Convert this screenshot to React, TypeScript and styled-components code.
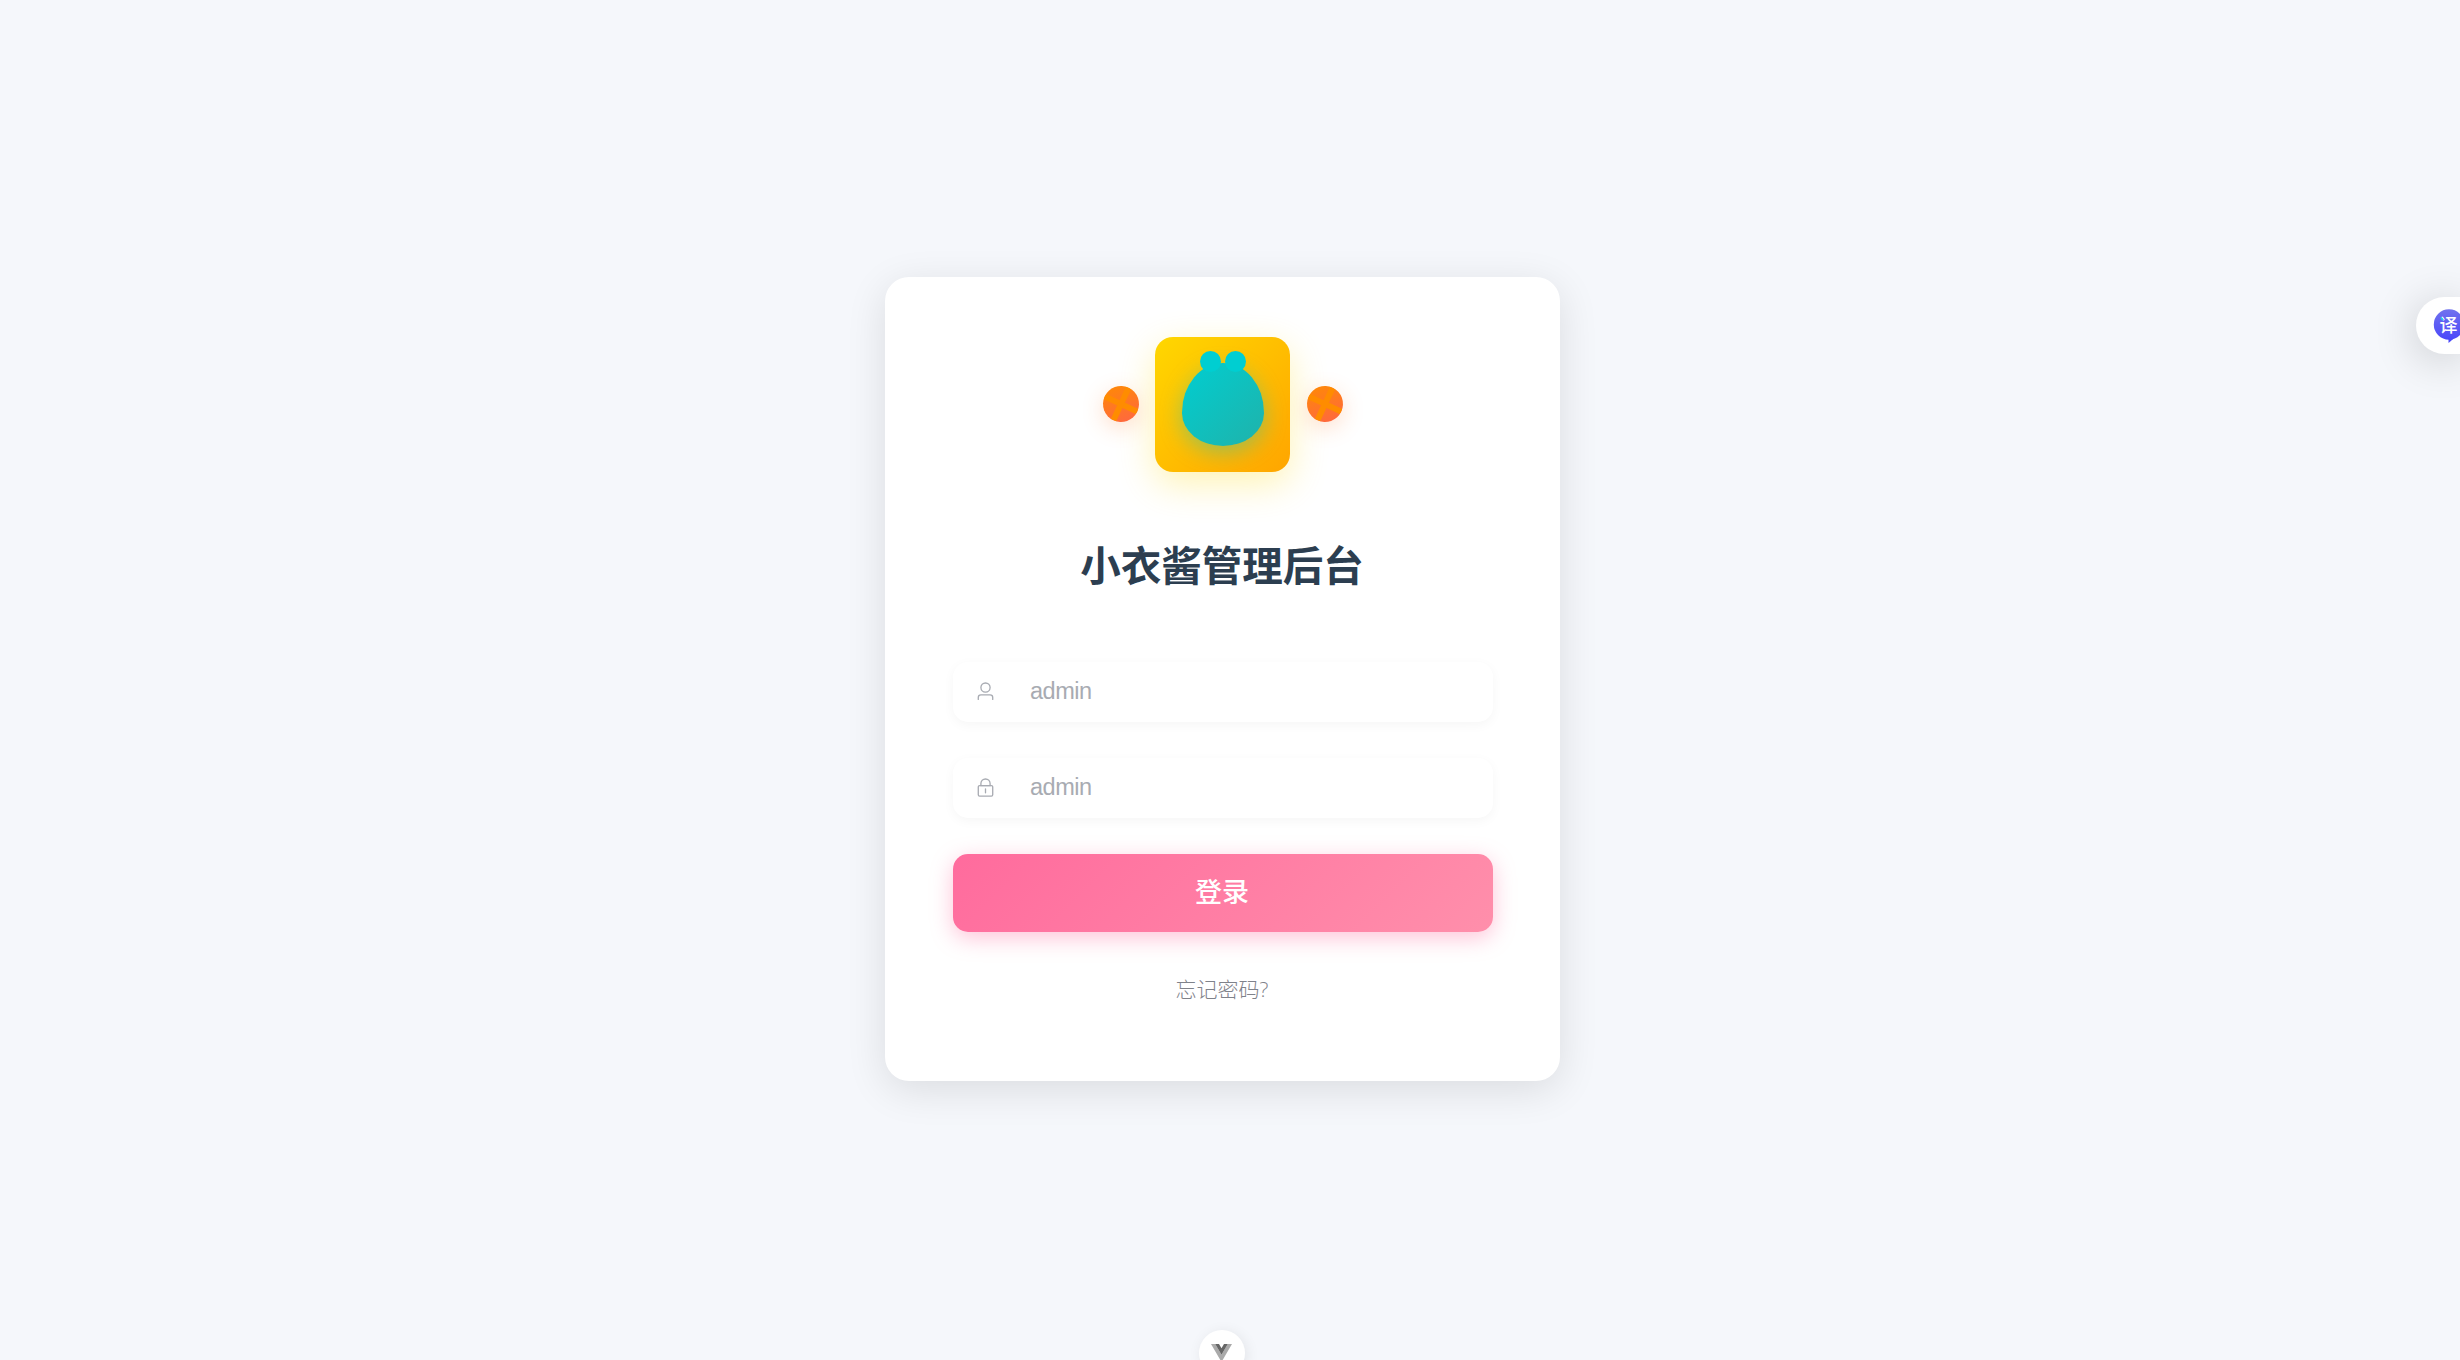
import React from 'react';
import styled, { createGlobalStyle } from 'styled-components';

const GlobalStyles = createGlobalStyle`
  * {
    box-sizing: border-box;
  }

  body {
    margin: 0;
    overflow: hidden;
    background: #f5f7fb;
    font-family: "Open Sans", "Noto Sans CJK SC", sans-serif;
  }
`;

const Page = styled.div`
  position: relative;
  display: flex;
  align-items: center;
  justify-content: center;
  height: 100vh;
  padding: 0 15px 2px 0;
  overflow: hidden;
  background: #f5f7fb;
`;

const Card = styled.main`
  display: flex;
  flex-direction: column;
  width: 675px;
  height: 804px;
  padding: 60px 67px 0 68px;
  border-radius: 24px;
  background: #fff;
  box-shadow: 0 9px 40px rgba(0, 0, 0, 0.11);
`;

const LogoRow = styled.div`
  display: flex;
  align-items: center;
  justify-content: center;
  gap: 16.5px;
  padding-right: 0.6px;
`;

const Logo = styled.div`
  display: flex;
  align-items: center;
  justify-content: center;
  width: 135px;
  height: 135px;
  padding-left: 0.6px;
  border-radius: 18px;
  background: linear-gradient(135deg, #ffd700 0%, #ffa500 100%);
  box-shadow: 0 12px 37.5px rgba(255, 215, 0, 0.3);
`;

const Body = styled.div`
  position: relative;
  width: 82.5px;
  height: 82.5px;
  border-radius: 50% 50% 50% 50% / 60% 60% 40% 40%;
  background: linear-gradient(135deg, #00ced1 0%, #20b2aa 100%);
  box-shadow: 0 6px 22.5px rgba(0, 206, 209, 0.4);
`;

const Ear = styled.span<{ $side: 'left' | 'right' }>`
  position: absolute;
  top: -12px;
  ${({ $side }) => $side}: 18px;
  width: 21px;
  height: 21px;
  border-radius: 50%;
  background: #00ced1;
`;

const Orange = styled.div`
  position: relative;
  width: 36px;
  height: 36px;
  border-radius: 50%;
  overflow: hidden;
  background: linear-gradient(135deg, #ff8c00 0%, #ff6347 100%);
  transform: rotate(25deg);
`;

const OrangeShadow = styled.div`
  margin-bottom: 1px;
  border-radius: 50%;
  box-shadow: 0 6px 22px rgba(255, 120, 40, 0.24);
`;

const Slice = styled.span<{ $vertical?: boolean }>`
  position: absolute;
  top: ${({ $vertical }) => ($vertical ? '0' : '15px')};
  left: ${({ $vertical }) => ($vertical ? '15px' : '0')};
  width: ${({ $vertical }) => ($vertical ? '6px' : '36px')};
  height: ${({ $vertical }) => ($vertical ? '36px' : '6px')};
  background: #ff8c00;
`;

const Title = styled.h1`
  margin: 64px 0 0;
  padding-right: 2px;
  text-align: center;
  font-size: 40.5px;
  font-weight: 700;
  line-height: 60px;
  color: #2c3e50;
`;

const Form = styled.form`
  display: flex;
  flex-direction: column;
  gap: 36px;
  margin-top: 66px;
`;

const Field = styled.label`
  display: flex;
  align-items: center;
  gap: 34px;
  height: 60px;
  padding: 0 22px;
  border-radius: 15px;
  color: #a8abb2;
  background: #fff;
  box-shadow: 0 3px 12px rgba(0, 0, 0, 0.04);

  svg {
    margin-bottom: 2px;
  }
`;

const Input = styled.input`
  flex: 1;
  height: 100%;
  padding: 0 0 2px;
  border: none;
  outline: none;
  background: transparent;
  font-family: "Liberation Sans", sans-serif;
  font-size: 23.5px;
  letter-spacing: -0.5px;

  &::placeholder {
    color: #a8abb2;
  }
`;

const LoginButton = styled.button`
  height: 78px;
  padding: 0 2px 5px 0;
  border: none;
  border-radius: 15px;
  font-family: inherit;
  font-size: 27px;
  font-weight: 500;
  color: #fff;
  background: linear-gradient(135deg, #ff6b9d 0%, #ff8fab 100%);
  box-shadow: 0 6px 22.5px rgba(255, 107, 157, 0.4);
`;

const ForgotLink = styled.a`
  align-self: center;
  margin-top: 42px;
  padding-right: 2px;
  font-size: 21px;
  font-weight: 300;
  line-height: 30px;
  color: #7f828a;
`;

const TranslateTab = styled.div`
  position: absolute;
  top: 297px;
  right: 0;
  display: flex;
  align-items: center;
  width: 44px;
  height: 57px;
  padding-left: 17px;
  border-radius: 28.5px 0 0 28.5px;
  background: #fff;
  box-shadow: 0 6px 45px rgba(0, 0, 0, 0.2);

  svg {
    flex: none;
  }
`;

const DevtoolsButton = styled.div`
  position: absolute;
  left: 1199px;
  bottom: -16px;
  display: flex;
  align-items: center;
  justify-content: center;
  width: 46px;
  height: 46px;
  padding-right: 1px;
  border-radius: 50%;
  background: #fff;
  box-shadow: 2px 2px 14px rgba(0, 0, 0, 0.08);
`;

const UserIcon = () => (
  <svg width="21" height="21" viewBox="0 0 1024 1024" fill="currentColor">
    <path d="M512 512a192 192 0 1 0 0-384 192 192 0 0 0 0 384m0 64a256 256 0 1 1 0-512 256 256 0 0 1 0 512m320 320v-96a96 96 0 0 0-96-96H288a96 96 0 0 0-96 96v96a32 32 0 1 1-64 0v-96a160 160 0 0 1 160-160h448a160 160 0 0 1 160 160v96a32 32 0 1 1-64 0" />
  </svg>
);

const LockIcon = () => (
  <svg width="21" height="21" viewBox="0 0 1024 1024" fill="currentColor">
    <path d="M224 448a32 32 0 0 0-32 32v384a32 32 0 0 0 32 32h576a32 32 0 0 0 32-32V480a32 32 0 0 0-32-32zm0-64h576a96 96 0 0 1 96 96v384a96 96 0 0 1-96 96H224a96 96 0 0 1-96-96V480a96 96 0 0 1 96-96" />
    <path d="M512 544a32 32 0 0 1 32 32v192a32 32 0 1 1-64 0V576a32 32 0 0 1 32-32m192-160v-64a192 192 0 1 0-384 0v64zM512 64a256 256 0 0 1 256 256v128H256V320A256 256 0 0 1 512 64" />
  </svg>
);

const OrangeSlice = () => (
  <OrangeShadow>
    <Orange>
      <Slice />
      <Slice $vertical />
    </Orange>
  </OrangeShadow>
);

function App() {
  return (
    <>
      <GlobalStyles />
      <Page>
        <Card>
          <LogoRow>
            <OrangeSlice />
            <Logo>
              <Body>
                <Ear $side="left" />
                <Ear $side="right" />
              </Body>
            </Logo>
            <OrangeSlice />
          </LogoRow>
          <Title>小衣酱管理后台</Title>
          <Form>
            <Field>
              <UserIcon />
              <Input placeholder="admin" />
            </Field>
            <Field>
              <LockIcon />
              <Input type="password" placeholder="admin" />
            </Field>
            <LoginButton type="button">登录</LoginButton>
          </Form>
          <ForgotLink>忘记密码?</ForgotLink>
        </Card>

        <TranslateTab>
          <svg width="32" height="34" viewBox="0 0 32 34">
            <defs>
              <linearGradient id="bubble" x1="0" y1="0" x2="0" y2="1">
                <stop offset="0" stopColor="#7072ee" />
                <stop offset="1" stopColor="#4a48fa" />
              </linearGradient>
            </defs>
            <circle cx="16" cy="15.5" r="15.2" fill="url(#bubble)" />
            <path d="M15.5 30v4l5-4.2z" fill="#4a48fa" />
            <text x="6.5" y="23" fontSize="18" fontWeight="500" fill="#fff">译</text>
            <path d="M8 8.5l2.2 2.7" stroke="#1fd0e8" strokeWidth="1.8" />
          </svg>
        </TranslateTab>

        <DevtoolsButton>
          <svg width="21" height="18" viewBox="0 0 21 18">
            <path d="M0 0h4.2l6.3 10.8L16.8 0H21L10.5 18z" fill="#aaa" />
            <path d="M4.2 0H8l2.5 4.3L13 0h3.8l-6.3 10.8z" fill="#666" />
          </svg>
        </DevtoolsButton>
      </Page>
    </>
  );
}

export default App;
